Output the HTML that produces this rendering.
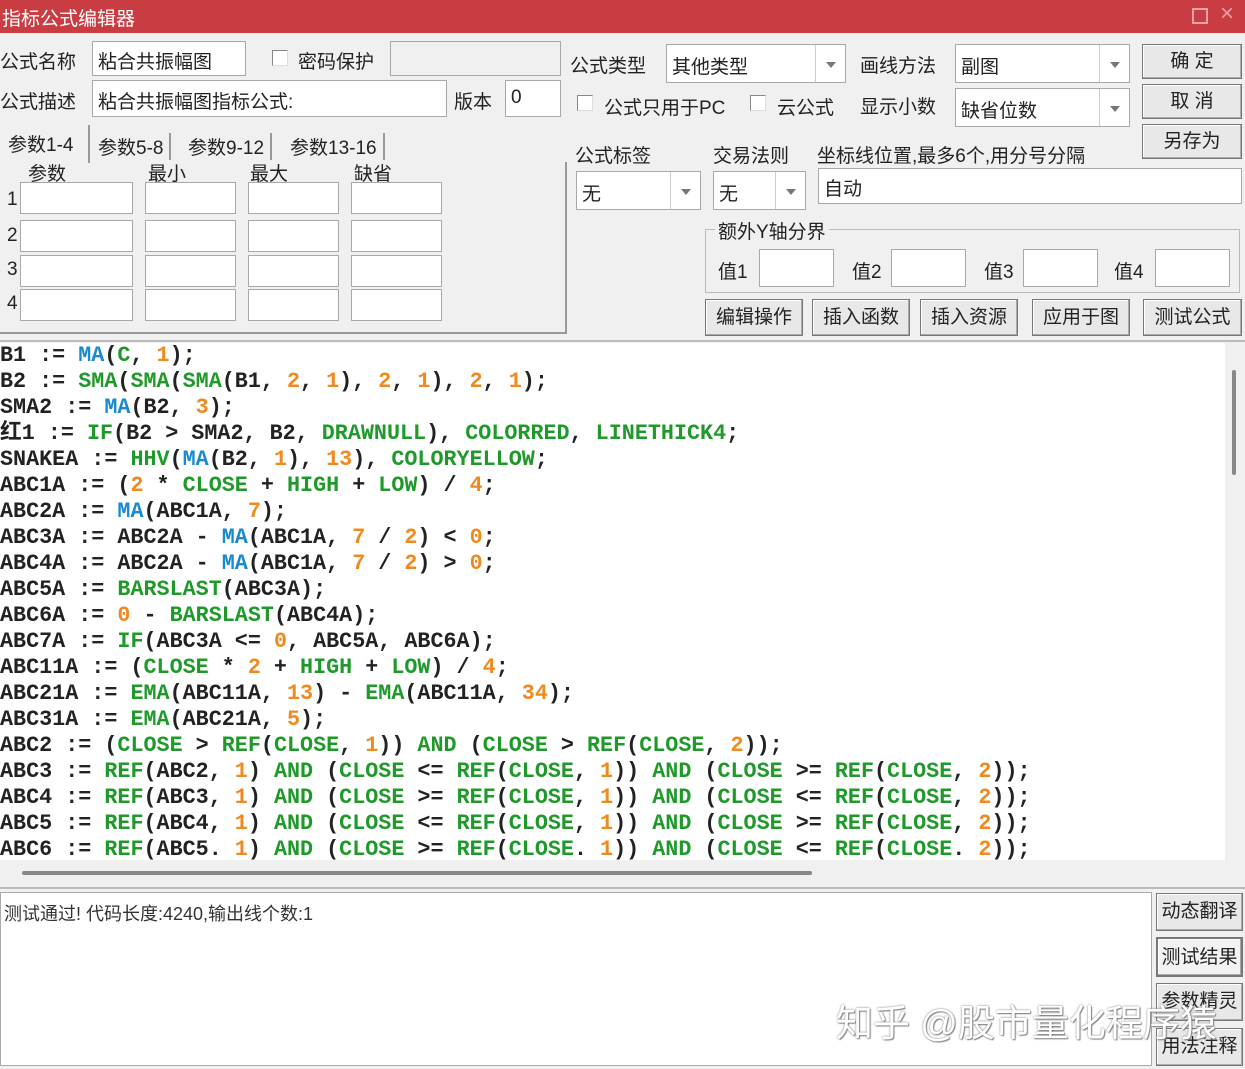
<!DOCTYPE html>
<html><head><meta charset="utf-8"><style>
*{box-sizing:border-box;margin:0;padding:0}
body{width:1245px;height:1069px;background:#f0f0f0;position:relative;overflow:hidden;font-family:"Liberation Sans","Noto Sans CJK SC",sans-serif;font-size:19px;color:#222}
.a{position:absolute;white-space:nowrap}
.in{position:absolute;background:#fff;border:1px solid #a8a8a8;padding-left:5px;line-height:normal}
.btn{position:absolute;background:#e8e8e8;border:1px solid #777;box-shadow:inset -1px -1px 0 #aaa,inset 1px 1px 0 #fff;text-align:center;font-size:19px}
.cb{position:absolute;width:16px;height:16px;background:#fff;border:1px solid #888;border-right-color:#ddd;border-bottom-color:#ddd}
.dd{position:absolute;right:0;top:0;bottom:0;width:30px;border-left:1px solid #ccc;background:#fff}
.dd:after{content:"";position:absolute;left:10px;top:50%;margin-top:-2px;border-left:5px solid transparent;border-right:5px solid transparent;border-top:6px solid #777}
#code{position:absolute;left:0;top:343px;width:1225px;height:517px;background:#fff;overflow:hidden;font-family:"Liberation Mono","Noto Sans CJK SC",monospace;font-weight:bold;font-size:22px;line-height:26px;color:#222;padding-top:0}
#code div{height:26px;white-space:pre;transform:scaleX(0.988);transform-origin:left}
.g{color:#1f9a2a}.b{color:#1a8ad0}.o{color:#f08a20}
</style></head><body>
<div class="a" style="left:0;top:0;width:1245px;height:33px;background:#c83c42"></div>
<div class="a" style="left:2px;top:4px;color:#fff;font-size:19px">指标公式编辑器</div>
<div class="a" style="left:1192px;top:8px;width:16px;height:16px;border:2px solid #e9a0a3"></div>
<div class="a" style="left:1220px;top:0px;color:#e9a0a3;font-size:24px">×</div>

<div class="a" style="left:0;top:47px">公式名称</div>
<div class="in" style="left:92px;top:41px;width:154px;height:35px;padding-top:5px">粘合共振幅图</div>
<div class="cb" style="left:272px;top:50px"></div>
<div class="a" style="left:298px;top:47px">密码保护</div>
<div class="in" style="left:390px;top:41px;width:171px;height:35px;background:#f0f0f0"></div>
<div class="a" style="left:0;top:87px">公式描述</div>
<div class="in" style="left:92px;top:80px;width:355px;height:37px;padding-top:6px">粘合共振幅图指标公式:</div>
<div class="a" style="left:454px;top:87px">版本</div>
<div class="in" style="left:505px;top:80px;width:56px;height:37px;padding-top:6px">0</div>

<div class="a" style="left:570px;top:51px">公式类型</div>
<div class="in" style="left:666px;top:44px;width:180px;height:39px;padding-top:7px">其他类型<div class="dd"></div></div>
<div class="a" style="left:860px;top:51px">画线方法</div>
<div class="in" style="left:955px;top:44px;width:175px;height:39px;padding-top:7px">副图<div class="dd"></div></div>
<div class="cb" style="left:577px;top:95px"></div>
<div class="a" style="left:604px;top:93px">公式只用于PC</div>
<div class="cb" style="left:750px;top:95px"></div>
<div class="a" style="left:777px;top:93px">云公式</div>
<div class="a" style="left:860px;top:92px">显示小数</div>
<div class="in" style="left:955px;top:88px;width:175px;height:39px;padding-top:7px">缺省位数<div class="dd"></div></div>
<div class="btn" style="left:1142px;top:44px;width:100px;height:35px;line-height:33px">确 定</div>
<div class="btn" style="left:1142px;top:84px;width:100px;height:35px;line-height:33px">取 消</div>
<div class="btn" style="left:1142px;top:124px;width:100px;height:35px;line-height:33px">另存为</div>

<div class="a" style="left:575px;top:141px">公式标签</div>
<div class="a" style="left:713px;top:141px">交易法则</div>
<div class="a" style="left:817px;top:141px">坐标线位置,最多6个,用分号分隔</div>
<div class="in" style="left:576px;top:171px;width:125px;height:39px;padding-top:7px">无<div class="dd"></div></div>
<div class="in" style="left:713px;top:171px;width:93px;height:39px;padding-top:7px">无<div class="dd"></div></div>
<div class="in" style="left:818px;top:168px;width:424px;height:36px;padding-top:5px">自动</div>
<div class="a" style="left:705px;top:229px;width:535px;height:64px;border:1px solid #bbb"></div>
<div class="a" style="left:715px;top:217px;background:#f0f0f0;padding:0 3px">额外Y轴分界</div>
<div class="a" style="left:718px;top:257px">值1</div><div class="in" style="left:759px;top:249px;width:75px;height:38px"></div>
<div class="a" style="left:852px;top:257px">值2</div><div class="in" style="left:891px;top:249px;width:75px;height:38px"></div>
<div class="a" style="left:984px;top:257px">值3</div><div class="in" style="left:1023px;top:249px;width:75px;height:38px"></div>
<div class="a" style="left:1114px;top:257px">值4</div><div class="in" style="left:1155px;top:249px;width:75px;height:38px"></div>
<div class="btn" style="left:705px;top:299px;width:98px;height:37px;line-height:35px">编辑操作</div>
<div class="btn" style="left:812px;top:299px;width:98px;height:37px;line-height:35px">插入函数</div>
<div class="btn" style="left:920px;top:299px;width:98px;height:37px;line-height:35px">插入资源</div>
<div class="btn" style="left:1032px;top:299px;width:98px;height:37px;line-height:35px">应用于图</div>
<div class="btn" style="left:1143px;top:299px;width:99px;height:37px;line-height:35px">测试公式</div>

<div class="a" style="left:0;top:162px;width:567px;height:172px;border-right:2px solid #999;border-bottom:2px solid #999"></div>
<div class="a" style="left:2px;top:125px;width:88px;height:38px;background:#f0f0f0;border-right:2px solid #999"></div>
<div class="a" style="left:8px;top:130px">参数1-4</div>
<div class="a" style="left:98px;top:133px;border-right:2px solid #999;padding-right:6px">参数5-8</div>
<div class="a" style="left:188px;top:133px;border-right:2px solid #999;padding-right:6px">参数9-12</div>
<div class="a" style="left:290px;top:133px;border-right:2px solid #999;padding-right:6px">参数13-16</div>
<div class="a" style="left:28px;top:159px">参数</div>
<div class="a" style="left:148px;top:159px">最小</div>
<div class="a" style="left:250px;top:159px">最大</div>
<div class="a" style="left:354px;top:159px">缺省</div>
<div class="a" style="left:7px;top:189px">1</div><div class="a" style="left:7px;top:225px">2</div><div class="a" style="left:7px;top:259px">3</div><div class="a" style="left:7px;top:293px">4</div>
<div class="in" style="left:20px;top:182px;width:113px;height:32px"></div>
<div class="in" style="left:145px;top:182px;width:91px;height:32px"></div>
<div class="in" style="left:248px;top:182px;width:91px;height:32px"></div>
<div class="in" style="left:351px;top:182px;width:91px;height:32px"></div>
<div class="in" style="left:20px;top:220px;width:113px;height:32px"></div>
<div class="in" style="left:145px;top:220px;width:91px;height:32px"></div>
<div class="in" style="left:248px;top:220px;width:91px;height:32px"></div>
<div class="in" style="left:351px;top:220px;width:91px;height:32px"></div>
<div class="in" style="left:20px;top:255px;width:113px;height:32px"></div>
<div class="in" style="left:145px;top:255px;width:91px;height:32px"></div>
<div class="in" style="left:248px;top:255px;width:91px;height:32px"></div>
<div class="in" style="left:351px;top:255px;width:91px;height:32px"></div>
<div class="in" style="left:20px;top:289px;width:113px;height:32px"></div>
<div class="in" style="left:145px;top:289px;width:91px;height:32px"></div>
<div class="in" style="left:248px;top:289px;width:91px;height:32px"></div>
<div class="in" style="left:351px;top:289px;width:91px;height:32px"></div>

<div class="a" style="left:0;top:340px;width:1245px;height:2px;background:#bbb"></div>
<div id="code">
<div>B1 := <span class="b">MA</span>(<span class="g">C</span>, <span class="o">1</span>);</div>
<div>B2 := <span class="g">SMA</span>(<span class="g">SMA</span>(<span class="g">SMA</span>(B1, <span class="o">2</span>, <span class="o">1</span>), <span class="o">2</span>, <span class="o">1</span>), <span class="o">2</span>, <span class="o">1</span>);</div>
<div>SMA2 := <span class="b">MA</span>(B2, <span class="o">3</span>);</div>
<div>红1 := <span class="g">IF</span>(B2 &gt; SMA2, B2, <span class="g">DRAWNULL</span>), <span class="g">COLORRED</span>, <span class="g">LINETHICK4</span>;</div>
<div>SNAKEA := <span class="g">HHV</span>(<span class="b">MA</span>(B2, <span class="o">1</span>), <span class="o">13</span>), <span class="g">COLORYELLOW</span>;</div>
<div>ABC1A := (<span class="o">2</span> * <span class="g">CLOSE</span> + <span class="g">HIGH</span> + <span class="g">LOW</span>) / <span class="o">4</span>;</div>
<div>ABC2A := <span class="b">MA</span>(ABC1A, <span class="o">7</span>);</div>
<div>ABC3A := ABC2A - <span class="b">MA</span>(ABC1A, <span class="o">7</span> / <span class="o">2</span>) &lt; <span class="o">0</span>;</div>
<div>ABC4A := ABC2A - <span class="b">MA</span>(ABC1A, <span class="o">7</span> / <span class="o">2</span>) &gt; <span class="o">0</span>;</div>
<div>ABC5A := <span class="g">BARSLAST</span>(ABC3A);</div>
<div>ABC6A := <span class="o">0</span> - <span class="g">BARSLAST</span>(ABC4A);</div>
<div>ABC7A := <span class="g">IF</span>(ABC3A &lt;= <span class="o">0</span>, ABC5A, ABC6A);</div>
<div>ABC11A := (<span class="g">CLOSE</span> * <span class="o">2</span> + <span class="g">HIGH</span> + <span class="g">LOW</span>) / <span class="o">4</span>;</div>
<div>ABC21A := <span class="g">EMA</span>(ABC11A, <span class="o">13</span>) - <span class="g">EMA</span>(ABC11A, <span class="o">34</span>);</div>
<div>ABC31A := <span class="g">EMA</span>(ABC21A, <span class="o">5</span>);</div>
<div>ABC2 := (<span class="g">CLOSE</span> &gt; <span class="g">REF</span>(<span class="g">CLOSE</span>, <span class="o">1</span>)) <span class="g">AND</span> (<span class="g">CLOSE</span> &gt; <span class="g">REF</span>(<span class="g">CLOSE</span>, <span class="o">2</span>));</div>
<div>ABC3 := <span class="g">REF</span>(ABC2, <span class="o">1</span>) <span class="g">AND</span> (<span class="g">CLOSE</span> &lt;= <span class="g">REF</span>(<span class="g">CLOSE</span>, <span class="o">1</span>)) <span class="g">AND</span> (<span class="g">CLOSE</span> &gt;= <span class="g">REF</span>(<span class="g">CLOSE</span>, <span class="o">2</span>));</div>
<div>ABC4 := <span class="g">REF</span>(ABC3, <span class="o">1</span>) <span class="g">AND</span> (<span class="g">CLOSE</span> &gt;= <span class="g">REF</span>(<span class="g">CLOSE</span>, <span class="o">1</span>)) <span class="g">AND</span> (<span class="g">CLOSE</span> &lt;= <span class="g">REF</span>(<span class="g">CLOSE</span>, <span class="o">2</span>));</div>
<div>ABC5 := <span class="g">REF</span>(ABC4, <span class="o">1</span>) <span class="g">AND</span> (<span class="g">CLOSE</span> &lt;= <span class="g">REF</span>(<span class="g">CLOSE</span>, <span class="o">1</span>)) <span class="g">AND</span> (<span class="g">CLOSE</span> &gt;= <span class="g">REF</span>(<span class="g">CLOSE</span>, <span class="o">2</span>));</div>
<div>ABC6 := <span class="g">REF</span>(ABC5. <span class="o">1</span>) <span class="g">AND</span> (<span class="g">CLOSE</span> &gt;= <span class="g">REF</span>(<span class="g">CLOSE</span>. <span class="o">1</span>)) <span class="g">AND</span> (<span class="g">CLOSE</span> &lt;= <span class="g">REF</span>(<span class="g">CLOSE</span>. <span class="o">2</span>));</div>
</div>
<div class="a" style="left:1225px;top:343px;width:20px;height:517px;background:#f0f0f0"></div>
<div class="a" style="left:1232px;top:370px;width:4px;height:105px;background:#888;border-radius:2px"></div>
<div class="a" style="left:0;top:860px;width:1245px;height:28px;background:#f0f0f0"></div>
<div class="a" style="left:22px;top:871px;width:790px;height:4px;background:#888;border-radius:2px"></div>
<div class="a" style="left:0;top:887px;width:1245px;height:2px;background:#bbb"></div>
<div class="a" style="left:0;top:892px;width:1152px;height:174px;background:#fff;border:1px solid #aaa"></div>
<div class="a" style="left:4px;top:900px;font-size:18px;color:#333">测试通过! 代码长度:4240,输出线个数:1</div>
<div class="btn" style="left:1156px;top:893px;width:87px;height:38px;line-height:36px">动态翻译</div>
<div class="btn" style="left:1156px;top:937px;width:87px;height:40px;line-height:38px;border:2px solid #777;background:#f2f2f2">测试结果</div>
<div class="btn" style="left:1156px;top:983px;width:87px;height:38px;line-height:36px">参数精灵</div>
<div class="btn" style="left:1156px;top:1028px;width:87px;height:38px;line-height:36px">用法注释</div>
<div class="a" style="left:836px;top:993px;font-size:37px;color:#fff;text-shadow:0 0 2px #777,1px 1px 1px #888">知乎 @股市量化程序猿</div>
</body></html>
